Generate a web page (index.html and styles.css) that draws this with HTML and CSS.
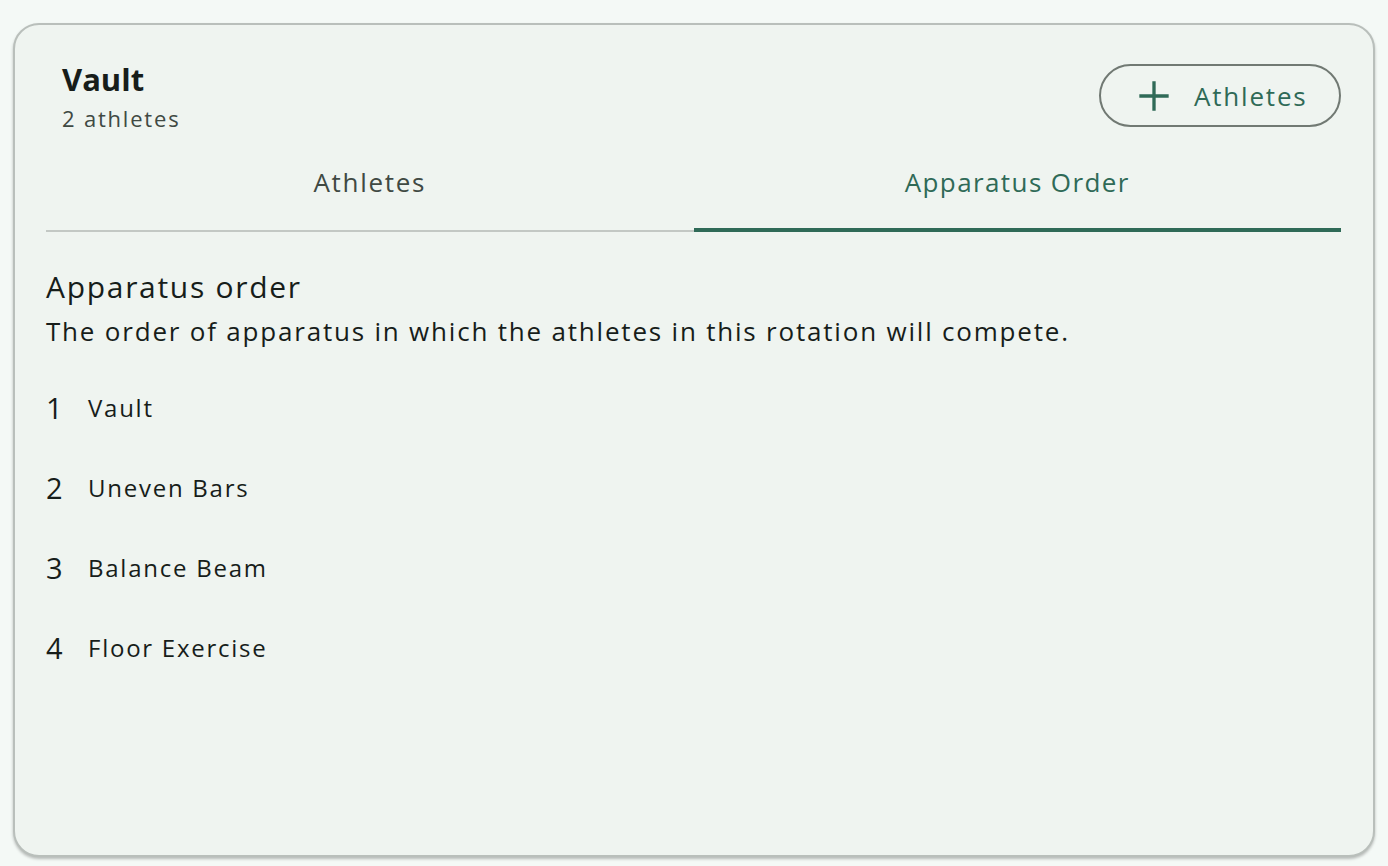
FILE: index.html
```html
<!DOCTYPE html>
<html lang="en">
<head>
<meta charset="utf-8">
<title>Vault</title>
<link rel="stylesheet" href="styles.css">
</head>
<body>
<div class="page">
  <section class="card">
    <header class="card-head">
      <div class="titles">
        <h1 class="title">Vault</h1>
        <div class="subtitle">2 athletes</div>
      </div>
      <button class="add-btn" type="button">
        <svg class="plus" viewBox="0 0 24 24" width="32" height="32" aria-hidden="true"><path d="M12 1v22M1 12h22" stroke="currentColor" stroke-width="2.5" fill="none"/></svg>
        <span>Athletes</span>
      </button>
    </header>
    <nav class="tabs">
      <div class="tab">Athletes</div>
      <div class="tab active">Apparatus Order</div>
    </nav>
    <div class="panel">
      <h2 class="panel-title">Apparatus order</h2>
      <p class="panel-desc">The order of apparatus in which the athletes in this rotation will compete.</p>
      <ol class="order">
        <li class="row"><span class="num">1</span><span class="name">Vault</span></li>
        <li class="row"><span class="num">2</span><span class="name">Uneven Bars</span></li>
        <li class="row"><span class="num">3</span><span class="name">Balance Beam</span></li>
        <li class="row"><span class="num">4</span><span class="name">Floor Exercise</span></li>
      </ol>
    </div>
  </section>
</div>
</body>
</html>
```
FILE: styles.css
```css
* { box-sizing: border-box; }
html, body { margin: 0; padding: 0; }
body {
  background: #f4f9f6;
  font-family: "Open Sans", "Liberation Sans", sans-serif;
  color: #171d1a;
  width: 1388px;
  height: 866px;
  overflow: hidden;
}
.page {
  padding: 23px 13px 9px 13px;
  height: 866px;
}
.card {
  height: 834px;
  background: #eff4f0;
  border: 2px solid #b9bfbb;
  border-radius: 26px;
  box-shadow: 0 2px 3px rgba(0,0,0,0.25);
  padding: 0 32px 0 31px;
  display: flex;
  flex-direction: column;
}
.card-head {
  display: flex;
  justify-content: space-between;
  align-items: flex-start;
  padding: 36px 0 0 16px;
  height: 125px;
}
.title {
  margin: 0;
  font-size: 31px;
  font-weight: 700;
  line-height: 36px;
  color: #171d1a;
}
.subtitle {
  margin-top: 8px;
  font-size: 22px;
  line-height: 26px;
  color: #404943;
  letter-spacing: 1.8px;
}
.add-btn {
  margin-top: 3px;
  height: 63px;
  width: 242px;
  border: 2px solid #717973;
  border-radius: 32px;
  background: transparent;
  color: #2f6a57;
  display: flex;
  align-items: center;
  gap: 24px;
  padding: 0 0 0 37px;
  font-family: inherit;
  font-size: 26px;
  font-weight: 500;
  letter-spacing: 1.8px;
}
.plus { display: block; flex: none; }
.tabs {
  display: flex;
  height: 82px;
  border-bottom: 2px solid #c3c8c4;
}
.tab {
  flex: 1;
  display: flex;
  align-items: center;
  justify-content: center;
  padding-bottom: 14px;
  font-size: 26px;
  font-weight: 500;
  letter-spacing: 1.7px;
  color: #404943;
  margin-bottom: -2px;
  border-bottom: 4px solid transparent;
}
.tab.active {
  color: #2f6a57;
  border-bottom-color: #2f6a57;
  letter-spacing: 1.4px;
}
.panel { padding-top: 35px; }
.panel-title {
  margin: 0;
  font-size: 30px;
  font-weight: 400;
  line-height: 40px;
  letter-spacing: 1.7px;
}
.panel-desc {
  margin: 8px 0 0 0;
  font-size: 26px;
  line-height: 32px;
  letter-spacing: 1.8px;
}
.order {
  list-style: none;
  margin: 21px 0 0 0;
  padding: 0;
}
.row {
  display: flex;
  align-items: center;
  height: 80px;
  margin-top: -22px;
  margin-bottom: 22px;
}
.row:first-child { margin-top: 0; }
.num {
  width: 42px;
  font-size: 29px;
  line-height: 36px;
}
.name {
  font-size: 24px;
  line-height: 30px;
  letter-spacing: 1.75px;
}
```
